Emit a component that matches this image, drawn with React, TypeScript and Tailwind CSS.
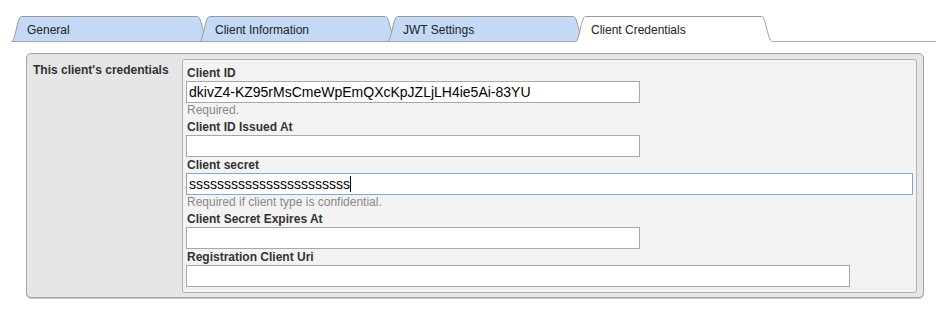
const tabs = [
  { label: "General", active: false },
  { label: "Client Information", active: false },
  { label: "JWT Settings", active: false },
  { label: "Client Credentials", active: true },
];

function Tab({ label, active, first }: { label: string; active: boolean; first: boolean }) {
  return (
    <div className={`relative h-[26px] w-[198px] shrink-0 ${first ? "" : "-ml-[10px]"}`}>
      <svg className="absolute inset-0" width="198" height="26" viewBox="0 0 198 26">
        <path
          d="M0.5 26 C4.5 26 6 0.5 10.5 0.5 L186.5 0.5 C191 0.5 192.5 26 197.5 26 Z"
          fill={active ? "#ffffff" : "#c3d9f6"}
          stroke="none"
        />
        <path
          d="M0.5 25.5 C4.5 25.5 6 0.5 10.5 0.5 L186.5 0.5 C191 0.5 192.5 25.5 197.5 25.5"
          fill="none"
          stroke="#9a9a9a"
          strokeWidth="1"
        />
        {!active && <line x1="0" y1="25.5" x2="198" y2="25.5" stroke="#a8a8a8" strokeWidth="1" />}
      </svg>
      <span className="relative block pl-[16px] pt-[6px] text-[12px] leading-[16px] text-[#222]">{label}</span>
    </div>
  );
}

function Field({
  label,
  value,
  width,
  help,
  focused,
}: {
  label: string;
  value?: string;
  width: string;
  help?: string;
  focused?: boolean;
}) {
  return (
    <div>
      <div className="h-[16px] pl-px text-[12px] font-bold leading-[16px] text-[#333]">{label}</div>
      <div
        className={`flex h-[22px] items-center border bg-white px-[2px] text-[14px] leading-[18px] text-black ${width} ${
          focused ? "border-[#7fa6e2]" : "border-[#a8a8a8]"
        }`}
      >
        <span>{value}</span>
        {focused && <span className="inline-block h-[16px] w-px bg-black" />}
      </div>
      {help && <div className="h-[16px] pl-px text-[12px] leading-[14px] text-[#888]">{help}</div>}
    </div>
  );
}

export default function App() {
  return (
    <div className="h-[310px] w-[936px] bg-white font-['Liberation_Sans',Arial,sans-serif]">
      {/* Tabs */}
      <div className="flex items-end pl-[11px] pt-[16px]">
        {tabs.map((t, i) => (
          <Tab key={t.label} label={t.label} active={t.active} first={i === 0} />
        ))}
        <div className="h-[26px] flex-1 border-b border-[#a8a8a8]" />
      </div>

      {/* Credentials panel */}
      <div className="ml-[26px] mt-[11px] flex h-[245px] w-[898px] rounded-[5px] border border-[#a3a3a3] bg-[#e6e6e6] pb-[4px] pr-[6px] pt-[5px] shadow-[0_1px_0_#c8c8c8]">
        <div className="w-[155px] shrink-0 pl-[6px] pt-[3px] text-[12px] font-bold leading-[16px] text-[#333]">
          This client's credentials
        </div>
        <div className="flex flex-1 flex-col rounded-[3px] border border-[#b3b3b3] bg-[#f4f3f3] pb-[4px] pl-[3px] pr-[3px] pt-[5px]">
          <Field label="Client ID" value="dkivZ4-KZ95rMsCmeWpEmQXcKpJZLjLH4ie5Ai-83YU" width="w-[454px]" help="Required." />
          <Field label="Client ID Issued At" width="w-[454px]" />
          <Field
            label="Client secret"
            value="sssssssssssssssssssssss"
            width="w-full"
            focused
            help="Required if client type is confidential."
          />
          <Field label="Client Secret Expires At" width="w-[454px]" />
          <Field label="Registration Client Uri" width="w-[664px]" />
        </div>
      </div>
    </div>
  );
}
